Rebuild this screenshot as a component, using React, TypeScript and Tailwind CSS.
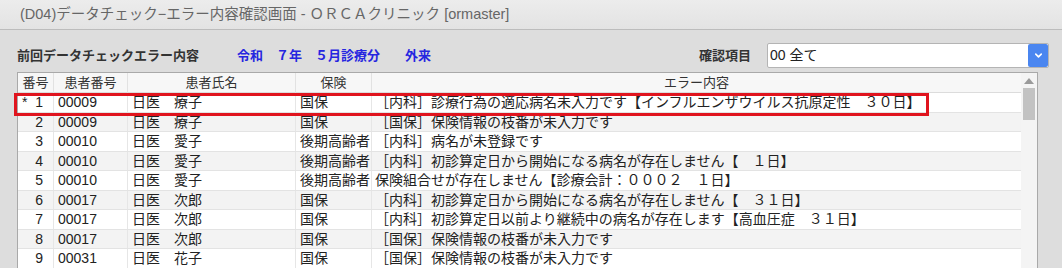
import { ChevronDown } from 'lucide-react';

interface ErrorRow {
  no: string;
  mark?: boolean;
  patientId: string;
  name: string;
  insurance: string;
  message: string;
}

const rows: ErrorRow[] = [
  { no: '1', mark: true, patientId: '00009', name: '日医　療子', insurance: '国保', message: '［内科］診療行為の適応病名未入力です【インフルエンザウイルス抗原定性　３０日】' },
  { no: '2', patientId: '00009', name: '日医　療子', insurance: '国保', message: '［国保］保険情報の枝番が未入力です' },
  { no: '3', patientId: '00010', name: '日医　愛子', insurance: '後期高齢者', message: '［内科］病名が未登録です' },
  { no: '4', patientId: '00010', name: '日医　愛子', insurance: '後期高齢者', message: '［内科］初診算定日から開始になる病名が存在しません【　１日】' },
  { no: '5', patientId: '00010', name: '日医　愛子', insurance: '後期高齢者', message: '保険組合せが存在しません【診療会計：０００２　１日】' },
  { no: '6', patientId: '00017', name: '日医　次郎', insurance: '国保', message: '［内科］初診算定日から開始になる病名が存在しません【　３１日】' },
  { no: '7', patientId: '00017', name: '日医　次郎', insurance: '国保', message: '［内科］初診算定日以前より継続中の病名が存在します【高血圧症　３１日】' },
  { no: '8', patientId: '00017', name: '日医　次郎', insurance: '国保', message: '［国保］保険情報の枝番が未入力です' },
  { no: '9', patientId: '00031', name: '日医　花子', insurance: '国保', message: '［国保］保険情報の枝番が未入力です' },
];

const cols = 'grid grid-cols-[36px_74px_168px_76px_1fr]';

export default function App() {
  return (
    <div className="w-[1062px] h-[268px] overflow-hidden bg-[#dddddd] text-[#222] font-['Liberation_Sans','Noto_Sans_CJK_JP',sans-serif]">
      {/* Title bar */}
      <div className="h-[30px] flex items-center pl-[20px] bg-gradient-to-b from-[#ececec] to-[#e3e3e3] border-b border-[#bcbcbc] text-[14.5px] text-[#666]">
        (D04)データチェック−エラー内容確認画面 - ＯＲＣＡクリニック [ormaster]
      </div>

      {/* Toolbar */}
      <div className="h-[42px] pt-[13px] pl-[17px] flex items-start">
        <div className="h-[25px] flex items-center text-[13px] font-bold w-full">
          <span className="text-[#333]">前回データチェックエラー内容</span>
          <span className="ml-[38px] text-[#2626e0]">令和　７年　５月診療分</span>
          <span className="ml-[25px] text-[#2626e0]">外来</span>
          <span className="ml-auto text-[#333]">確認項目</span>
          <div className="ml-[16px] mr-[13px] w-[282px] h-[25px] flex bg-white border border-[#b4b4b4] rounded-[2px] overflow-hidden">
            <span className="flex-1 pl-[2px] flex items-center text-[14px] font-normal text-[#222]">00 全て</span>
            <span className="w-[20px] flex items-center justify-center bg-[#4a86f0] rounded-[2px]">
              <ChevronDown className="w-[11px] h-[11px] text-white" strokeWidth={3.5} />
            </span>
          </div>
        </div>
      </div>

      {/* Table */}
      <div className="relative ml-[17px] w-[1021px] border border-[#a9a9a9] bg-white flex">
        <div className="w-[1003px]">
          <div className={`${cols} h-[20px] bg-[#f7f7f7] border-b border-[#dcdcdc] text-[13px] text-[#333]`}>
            {['番号', '患者番号', '患者氏名', '保険', 'エラー内容'].map((h) => (
              <div key={h} className="flex items-center justify-center border-r border-[#e2e2e2] last:border-r-0">
                {h}
              </div>
            ))}
          </div>
          {rows.map((r, i) => (
            <div
              key={r.no}
              className={`${cols} h-[19.5px] border-b border-[#e3e3e3] text-[14px] leading-none ${i % 2 === 1 ? 'bg-[#f3f3f3]' : 'bg-white'}`}
            >
              <div className="flex items-center justify-between pl-[4px] pr-[10px] border-r border-[#e6e6e6]">
                <span>{r.mark ? '*' : ''}</span>
                <span>{r.no}</span>
              </div>
              <div className="flex items-center pl-[4px] border-r border-[#e6e6e6]">{r.patientId}</div>
              <div className="flex items-center pl-[4px] border-r border-[#e6e6e6] whitespace-pre">{r.name}</div>
              <div className="flex items-center pl-[4px] border-r border-[#e6e6e6] whitespace-nowrap">{r.insurance}</div>
              <div className="flex items-center pl-[3px] whitespace-pre">{r.message}</div>
            </div>
          ))}
        </div>

        {/* Scrollbar */}
        <div className="w-[16px] bg-[#f4f4f4] flex flex-col items-center pt-[5px]">
          <svg width="10" height="6" viewBox="0 0 10 6">
            <path d="M5 0 L10 6 L0 6 Z" fill="#9a9a9a" />
          </svg>
          <div className="mt-[4px] w-[12px] h-[32px] bg-[#c2c2c2]" />
        </div>

        {/* Highlight annotation */}
        <div className="absolute left-[-4px] top-[20px] w-[915px] h-[23px] border-[3px] border-[#e0141e] pointer-events-none" />
      </div>
    </div>
  );
}
